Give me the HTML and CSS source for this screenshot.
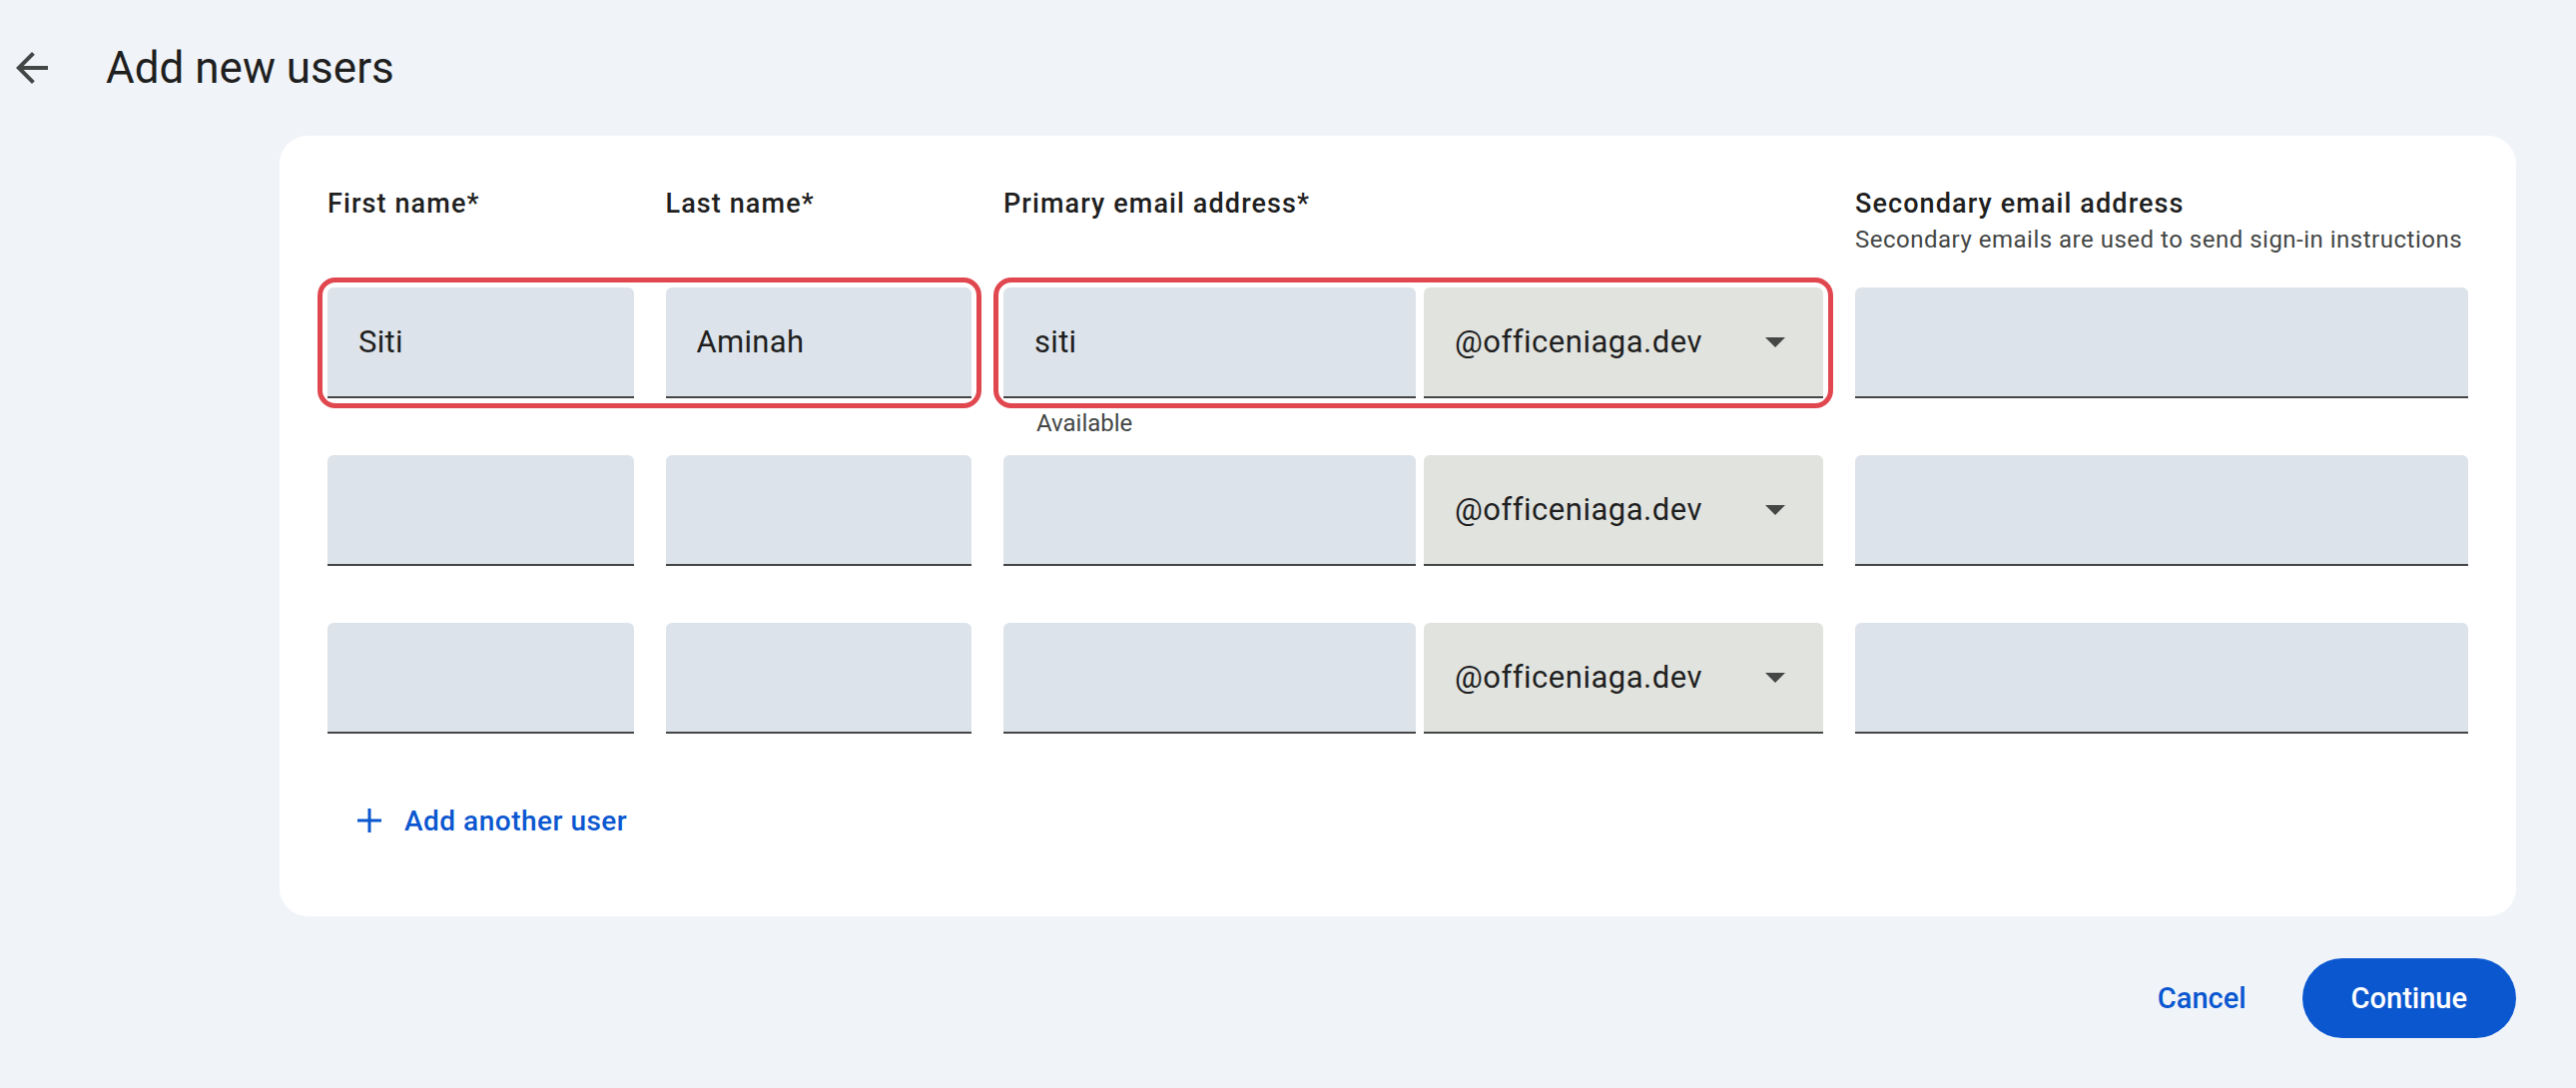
FILE: index.html
```html
<!DOCTYPE html>
<html lang="en">
<head>
    <meta charset="UTF-8">
    <meta name="viewport" content="width=device-width, initial-scale=1.0">
    <title>Add new users</title>
    <link rel="stylesheet" href="styles.css">
</head>
<body>
    <div class="pageHeader">
      <button class="backButton" aria-label="Back">
        <svg width="48" height="48" viewBox="0 0 24 24"><path d="M20 11H7.83l5.59-5.59L12 4l-8 8 8 8 1.41-1.41L7.83 13H20v-2z"/></svg>
      </button>
      <h1>Add new users</h1>
    </div>

    <div class="mainContainer">
      <!--* the user table -->
      <div class="usersCard">
        <div class="usersGrid usersHeader">
          <div class="nameHeader">
            <div class="colLabel">First name*</div>
            <div class="colLabel">Last name*</div>
          </div>
          <div class="colLabel">Primary email address*</div>
          <div>
            <div class="colLabel">Secondary email address</div>
            <div class="colHint">Secondary emails are used to send sign-in instructions</div>
          </div>
        </div>

        <div class="usersGrid usersRows">
          <!-- row 1 -->
          <div class="fieldGroup flagged">
            <input class="textField" type="text" value="Siti">
            <input class="textField" type="text" value="Aminah">
          </div>
          <div class="emailCell">
            <div class="fieldGroup emailGroup flagged">
              <input class="textField" type="text" value="siti">
              <div class="domainSelect">
                <span>@officeniaga.dev</span>
                <svg width="20" height="10" viewBox="0 0 10 5"><path d="M0 0l5 5 5-5z"/></svg>
              </div>
            </div>
            <div class="fieldHelper">Available</div>
          </div>
          <input class="textField" type="text">

          <!-- row 2 -->
          <div class="fieldGroup">
            <input class="textField" type="text">
            <input class="textField" type="text">
          </div>
          <div class="emailCell">
            <div class="fieldGroup emailGroup">
              <input class="textField" type="text">
              <div class="domainSelect">
                <span>@officeniaga.dev</span>
                <svg width="20" height="10" viewBox="0 0 10 5"><path d="M0 0l5 5 5-5z"/></svg>
              </div>
            </div>
          </div>
          <input class="textField" type="text">

          <!-- row 3 -->
          <div class="fieldGroup">
            <input class="textField" type="text">
            <input class="textField" type="text">
          </div>
          <div class="emailCell">
            <div class="fieldGroup emailGroup">
              <input class="textField" type="text">
              <div class="domainSelect">
                <span>@officeniaga.dev</span>
                <svg width="20" height="10" viewBox="0 0 10 5"><path d="M0 0l5 5 5-5z"/></svg>
              </div>
            </div>
          </div>
          <input class="textField" type="text">
        </div>

        <button class="addUserButton">
          <svg width="24" height="24" viewBox="0 0 24 24"><path d="M12 0v24M0 12h24" stroke-width="3"/></svg>
          Add another user
        </button>
      </div>

      <div class="footerActions">
        <button class="textButton">Cancel</button>
        <button class="filledButton">Continue</button>
      </div>
    </div>
</body>
</html>
```

FILE: styles.css
```css
:root {
    --page-color: #f0f4f9;
    --card-color: #ffffff;
    --text-color: #1f1f1f;
    --text-muted: #444746;
    --field-color: #dde3ea;
    --select-color: #e1e3df;
    --underline-color: #444746;
    --accent-color: #0b57d0;
    --flag-color: #e0474f;
}
body {
    margin: 0;
    font-family: Roboto, "Noto Sans", sans-serif;
    color: var(--text-color);
    background-color: var(--page-color);
}
button {
    font-family: inherit;
    cursor: pointer;
}
.pageHeader {
    display: flex;
    align-items: center;
    gap: 50px;
    padding: 44px 0 0 8px;
}
.backButton {
    display: flex;
    padding: 0;
    border: none;
    background: none;
}
.backButton svg {
    fill: var(--text-muted);
}
h1 {
    margin: 0;
    font-size: 44px;
    line-height: 48px;
    font-weight: 400;
}
.mainContainer {
    padding: 44px 60px 0 280px;
}
.usersCard {
    background-color: var(--card-color);
    border-radius: 28px;
    padding: 50px 48px 72px;
}
.usersGrid {
    display: grid;
    grid-template-columns: 645px 821px 1fr;
    column-gap: 32px;
}
.usersHeader {
    margin-bottom: 30px;
}
.usersRows {
    grid-auto-rows: 111px;
    row-gap: 57px;
}
.nameHeader {
    display: flex;
    gap: 32px;
}
.nameHeader .colLabel {
    flex: 1;
}
.colLabel {
    font-size: 27px;
    line-height: 36px;
    font-weight: 500;
    letter-spacing: 1.1px;
}
.colHint {
    font-size: 24px;
    line-height: 36px;
    color: var(--text-muted);
    letter-spacing: 0.5px;
}
.fieldGroup {
    display: flex;
    gap: 32px;
    border-radius: 8px;
}
.fieldGroup > .textField {
    flex: 1;
    min-width: 0;
}
.emailGroup {
    gap: 8px;
}
.flagged {
    outline: 5px solid var(--flag-color);
    outline-offset: 5px;
}
.textField {
    box-sizing: border-box;
    width: 100%;
    height: 111px;
    padding: 0 31px;
    border: none;
    border-bottom: 2px solid var(--underline-color);
    border-radius: 6px 6px 0 0;
    background-color: var(--field-color);
    font: 31px Roboto, sans-serif;
    letter-spacing: 0.3px;
    color: var(--text-color);
    outline: none;
}
.domainSelect {
    box-sizing: border-box;
    flex: none;
    width: 400px;
    height: 111px;
    display: flex;
    align-items: center;
    justify-content: space-between;
    padding: 0 38px 0 31px;
    border-bottom: 2px solid var(--underline-color);
    border-radius: 6px 6px 0 0;
    background-color: var(--select-color);
    font-size: 31px;
    letter-spacing: 0.5px;
}
.domainSelect svg {
    fill: var(--text-muted);
}
.fieldHelper {
    padding: 9px 0 0 33px;
    font-size: 24px;
    line-height: 32px;
    color: var(--text-muted);
}
.addUserButton {
    display: flex;
    align-items: center;
    gap: 23px;
    height: 48px;
    margin-top: 63px;
    padding: 0 30px;
    border: none;
    background: none;
    font-size: 28px;
    font-weight: 500;
    letter-spacing: 0.5px;
    color: var(--accent-color);
}
.addUserButton svg {
    stroke: var(--accent-color);
}
.footerActions {
    display: flex;
    justify-content: flex-end;
    align-items: center;
    gap: 32px;
    margin-top: 42px;
}
.textButton {
    height: 80px;
    padding: 0 24px;
    border: none;
    background: none;
    font-size: 29px;
    font-weight: 500;
    color: var(--accent-color);
}
.filledButton {
    height: 80px;
    padding: 0 49px;
    border: none;
    border-radius: 40px;
    background-color: var(--accent-color);
    font-size: 29px;
    font-weight: 500;
    color: #ffffff;
}
```
